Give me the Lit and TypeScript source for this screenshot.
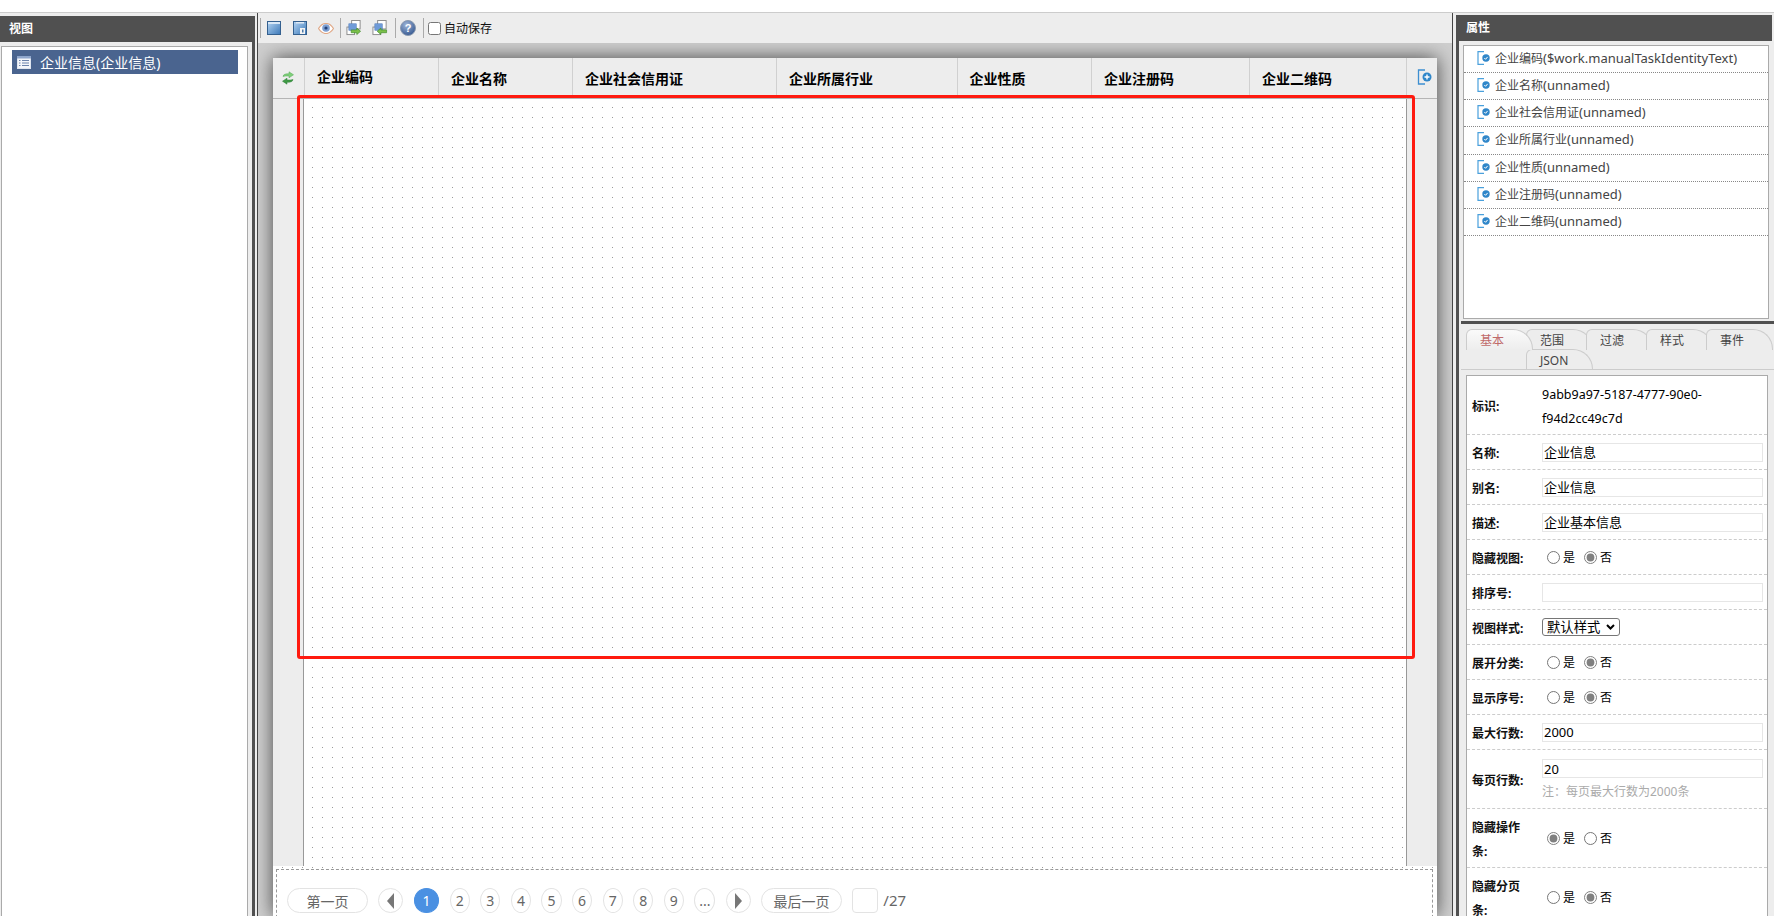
import { LitElement, html, css, svg } from "lit";
import { customElement } from "lit/decorators.js";

const saveIcon = (label: boolean) => html`<svg class="ic14" viewBox="0 0 14 14">
  <defs><linearGradient id="sg" x1="0" y1="0" x2="1" y2="1"><stop offset="0" stop-color="#b5d5f3"/><stop offset="1" stop-color="#3b78b8"/></linearGradient></defs>
  <rect x=".5" y=".5" width="13" height="13" fill="url(#sg)" stroke="#34608f"/>
  ${label ? svg`<rect x="3" y="1" width="8" height="1.500" fill="#dfeaf5"/><rect x="7" y="7" width="5" height="6" fill="#f4f4f4"/><rect x="9" y="8.500" width="1.500" height="3" fill="#4b79a8"/>` : svg`<rect x="1" y="1" width="12" height="2" fill="#d8e8f7"/>`}
</svg>`;

const eyeIcon = html`<svg class="eye" viewBox="0 0 16 11">
  <path d="M.5 5.500C3 1.500 5.500.5 8 .5s5 1 7.500 5c-2.500 4-5 5-7.500 5s-5-1-7.500-5z" fill="#fff" stroke="#e0a988" stroke-width="1.200"/>
  <circle cx="8" cy="5" r="3.800" fill="#7c9fd2"/><circle cx="8" cy="5" r="1.600" fill="#23427a"/>
</svg>`;

const transferIcon = (back: boolean) => html`<svg class="ic16" viewBox="0 0 16 17">
  <rect x="5.500" y=".5" width="9" height="9" fill="#fff" stroke="#8a8a8a"/>
  <rect x=".5" y="7.500" width="8" height="8" fill="#fff" stroke="#8a8a8a"/>
  <rect x="2.500" y="4" width="8" height="7" fill="#6f9bd8" stroke="#4c77b5" stroke-width=".5"/>
  ${back
    ? svg`<path d="M5 12l4-3.500v2h6v3H9v2z" fill="#7cc04a" stroke="#3f8a2a" stroke-width=".7"/>`
    : svg`<path d="M15 12l-4-3.500v2H5v3h6v2z" fill="#7cc04a" stroke="#3f8a2a" stroke-width=".7"/>`}
</svg>`;

const helpIcon = html`<svg class="ic16" viewBox="0 0 16 16">
  <defs><radialGradient id="hg" cx=".4" cy=".3" r=".8"><stop offset="0" stop-color="#9fb6d8"/><stop offset="1" stop-color="#2c4f8a"/></radialGradient></defs>
  <circle cx="8" cy="8" r="7.500" fill="url(#hg)" stroke="#8a9ab0"/>
  <text x="8" y="12" text-anchor="middle" class="q">?</text>
</svg>`;

const refreshIcon = html`<svg class="refresh" viewBox="0 0 12 14">
  <path d="M1 5.500C1.500 3 3.500 2.800 7 2.800V.8L11.500 3.800 7 6.800V5C4 5 2.500 5 1 5.500z" fill="#7fcf7a" stroke="#55a855" stroke-width=".5"/>
  <path d="M11 8.500C10.500 11 8.500 11.200 5 11.200v2L.5 10.200 5 7.200V9c3 0 4.500 0 6-.5z" fill="#3f9a45" stroke="#2f7f38" stroke-width=".5"/>
</svg>`;

const addIcon = html`<svg class="add" viewBox="0 0 14 16">
  <path d="M7.500 1H1v14h6.500" fill="none" stroke="#3d8fd1" stroke-width="1.300"/>
  <circle cx="9.500" cy="8" r="4.500" fill="#2f86c9"/>
  <path d="M7 8h5M9.500 5.500v5" stroke="#fff" stroke-width="1.400"/>
</svg>`;

const fieldIcon = html`<svg class="field" viewBox="0 0 13 14">
  <path d="M7 .7H1v12.600h6" fill="none" stroke="#4aa0dc" stroke-width="1.200"/>
  <circle cx="9" cy="7" r="3.700" fill="#2f86c9"/>
  <path d="M7.300 7l1.300 1.300 2-2.400" fill="none" stroke="#fff" stroke-width="1"/>
</svg>`;

const listIcon = html`<svg class="listic" viewBox="0 0 14 13">
  <rect x=".5" y=".5" width="13" height="12" fill="#f4f6fa" stroke="#dfe5ef"/>
  <rect x="0" y="0" width="14" height="2.500" fill="#8fa6cc"/>
  <path d="M2 4.500h1.500M5 4.500h7M2 7h1.500M5 7h7M2 9.500h1.500M5 9.500h7" stroke="#6c83ac"/>
</svg>`;

const chevron = html`<svg class="chev" viewBox="0 0 9 6"><path d="M1 1l3.500 3.500L8 1" fill="none" stroke="#000" stroke-width="2"/></svg>`;

const COLS = ["企业编码", "企业名称", "企业社会信用证", "企业所属行业", "企业性质", "企业注册码", "企业二维码"];
const FIELDS: [string, string][] = [
  ["企业编码", "($work.manualTaskIdentityText)"],
  ["企业名称", "(unnamed)"],
  ["企业社会信用证", "(unnamed)"],
  ["企业所属行业", "(unnamed)"],
  ["企业性质", "(unnamed)"],
  ["企业注册码", "(unnamed)"],
  ["企业二维码", "(unnamed)"],
];
const TABS = ["基本", "范围", "过滤", "样式", "事件"];
const PAGES = ["2", "3", "4", "5", "6", "7", "8", "9", "..."];

@customElement("app-root")
export class AppRoot extends LitElement {
  static styles = css`
    :host { display: block; font-family: "Noto Sans", "Noto Sans CJK SC", sans-serif; font-size: 12px; color: #000; }
    * { box-sizing: border-box; }
    .root { position: relative; height: 916px; width: 1774px; overflow: hidden; padding-top: 12px; background: #fff; }
    .main { display: flex; height: 904px; border-top: 1px solid #ccc; background: #ededed; }

    .left { width: 257px; flex: none; display: flex; flex-direction: column; }
    .head { height: 26px; background: #505050; color: #fff; font-weight: 700; font-size: 12px; line-height: 26px; flex: none; }
    .left .head { margin-top: 3px; width: 255px; padding-left: 9px; }
    .left-body { flex: 1; display: flex; width: 255px; border-right: 3px solid #505050; padding: 4px 4px 0 1px; }
    .tree { flex: 1; background: #fff; border: 1px solid #aaa; border-bottom: 0; padding: 3px 9px 3px 10px; }
    .tree-item { height: 24px; background: #4a648f; color: #fff; display: flex; align-items: center; padding-left: 5px; font-size: 14px; gap: 9px; }
    .listic { width: 14px; height: 13px; }

    .center { width: 1196px; flex: none; border-left: 1px solid #444; border-right: 1px solid #444; display: flex; flex-direction: column; }
    .toolbar { height: 30px; flex: none; display: flex; align-items: center; padding-left: 2px; }
    .sep { width: 1px; height: 20px; background: #aaa; flex: none; }
    .toolbar span:not(.sep) { display: flex; align-items: center; }
    .ic14 { width: 14px; height: 14px; flex: none; }
    .ic16 { width: 16px; height: 16px; flex: none; }
    .eye { width: 16px; height: 11px; flex: none; }
    .q { font: 700 11px "Liberation Sans", sans-serif; fill: #fff; }
    .t1 { margin-left: 6px; } .t2 { margin-left: 12px; } .t3 { margin-left: 11px; } .t4 { margin-left: 6px; }
    .t5 { margin-left: 5px; } .t6 { margin-left: 10px; } .t7 { margin-left: 7px; } .t8 { margin-left: 4px; }
    .t9 { margin-left: 7px; }
    .auto { display: flex; align-items: center; margin-left: 4px; color: #111; }
    .auto input { width: 13px; height: 13px; margin: 0 3px 0 0; }

    .stage { flex: 1; min-height: 0; background: #cfcfcf; padding: 15px 15px 0; overflow: hidden; }
    .card { height: 100%; background: #fff; box-shadow: 0 0 18px #484848; display: flex; flex-direction: column; }
    .thead { height: 41px; flex: none; background: #ededed; border-bottom: 1px solid #b5b5b5; display: grid; grid-template-columns: 31px 134px 134px 204px 180.500px 134.500px 158px 157px 31px; }
    .th { border-left: 1px solid #d0d0d0; display: flex; align-items: center; padding: 0 0 0 12px; font-weight: 700; font-size: 14px; color: #000; }
    .th.first { padding-bottom: 4px; }
    .th.ic { border: 0; padding: 0 0 0 9px; }
    .th.plus { padding: 0 0 0 10px; }
    .refresh { width: 12px; height: 14px; }
    .add { width: 15px; height: 16px; margin-bottom: 3px; }

    .tbody { height: 767px; flex: none; display: flex; }
    .gut { width: 31px; background: #ededed; flex: none; }
    .gut.l { border-right: 1px solid #999; }
    .gut.r { border-left: 1px solid #999; }
    .dots { background-color: #fff; background-image: conic-gradient(at 1px 1px, transparent 75%, #999 0); background-size: 10px 10px; }
    .canvas { flex: 1; background-position: 8px 8px; }

    .pager { flex: 1; padding: 3px 4px 0 3px; background-position: 9px 1px; }
    .pager-in { height: 100px; background: #fff; border: 1px dashed #999; padding: 18px 0 0 10px; display: flex; gap: 10.400px; align-items: flex-start; }
    .pg { height: 25px; width: 20.200px; flex: none; border: 1px solid #e3e3e3; border-radius: 50%; color: #666; font-size: 14px; display: flex; align-items: center; justify-content: center; background: #fff; }
    .pg.wide { width: 81px; border-radius: 13px; }
    .pg.arrow { width: 25px; }
    .pg.on { width: 25.500px; background: #4a90e2; border-color: #4a90e2; color: #fff; }
    .pg.more { width: 21px; }
    .tri { width: 0; height: 0; border-top: 8px solid transparent; border-bottom: 8px solid transparent; }
    .tri.l { border-right: 7px solid #777; }
    .tri.r { border-left: 7px solid #777; }
    .pg-in { width: 26px; height: 25px; flex: none; border: 1px solid #e3e3e3; border-radius: 4px; background: #fff; }
    .pg-total { font-size: 15px; color: #666; margin-left: -5.500px; line-height: 25px; }

    .right { width: 321px; flex: none; padding-left: 3px; display: flex; flex-direction: column; }
    .right .head { margin-top: 2px; width: 316px; padding-left: 10px; }
    .right-body { flex: 1; min-height: 0; border-left: 3px solid #505050; padding-left: 2px; display: flex; flex-direction: column; }
    .fields { height: 274px; flex: none; margin: 4px 0 2px 2px; width: 306px; background: #fff; border: 1px solid #aaa; }
    .field-row { height: 27.150px; display: flex; align-items: center; gap: 5px; padding: 0 0 2px 13px; border-bottom: 1px dotted #888; color: #444; font-size: 12px; }
    .latin { font-size: 13px; }
    .field { width: 13px; height: 14px; flex: none; }
    .rule { height: 3px; flex: none; background: #505050; }

    .tabs { flex: none; height: 46px; padding: 5px 0 0 5px; border-bottom: 1px solid #ccc; display: grid; grid-template-columns: repeat(5, 60px); grid-auto-rows: 20px; overflow: hidden; }
    .tab { width: 67px; height: 21px; border: 1px solid #ccc; border-bottom: 0; border-radius: 6px 20px 0 0; padding-left: 13px; line-height: 21px; color: #444; background: #ededed; }
    .tab.on { color: #c06a6a; background: linear-gradient(#fafafa, #ededed); position: relative; z-index: 1; }
    .tab.json { grid-column: 2; }

    .form { margin: 5px 0 0 5px; width: 302px; flex: 1; background: #fff; border: 1px solid #aaa; border-bottom: 0; overflow: hidden; }
    .row { display: grid; grid-template-columns: 70px 1fr; padding: 5px; border-bottom: 1px dashed #ccc; align-items: center; line-height: 24px; }
    .row > label { font-weight: 700; font-size: 12px; width: 60px; color: #111; transform: translateY(2px); }
    .val { min-height: 24px; display: flex; align-items: center; flex-wrap: wrap; }
    .val.id { display: block; width: 190px; height: 48px; padding-top: 2px; font-size: 12.500px; }
    .inp { width: 221px; height: 19px; border: 1px solid #e6e6e6; padding: 0 1px; font: inherit; font-size: 13px; color: #000; background: #fff; outline: none; }
    .inp.top { margin: 4px 0 1px; }
    .hint { color: #aaa; width: 100%; height: 24px; line-height: 26px; font-size: 12px; }
    .sel { width: 78px; height: 18px; font-size: 13.333px; line-height: 16px; font-family: "Noto Sans CJK SC", sans-serif; background: #fff; color: #000; border: 1px solid #767676; border-radius: 3px; padding: 0 4px; display: flex; align-items: center; justify-content: space-between; overflow: hidden; }
    .chev { width: 9px; height: 6px; flex: none; }
    .radio { display: flex; align-items: center; margin-right: 4px; accent-color: #808080; }
    .radio input { width: 13px; height: 13px; margin: 0 3px 0 5px; }
    .rt { padding-top: 2px; line-height: 22px; }

    .mark { position: absolute; left: 297px; top: 95px; width: 1118px; height: 564px; border: 3px solid #ff1a0f; border-radius: 3px; pointer-events: none; }
  `;

  private radios(name: string, yes: boolean) {
    return html`<div class="val">
      <span class="radio"><input type="radio" name=${name} ?checked=${yes} /><span class="rt">是</span></span>
      <span class="radio"><input type="radio" name=${name} ?checked=${!yes} /><span class="rt">否</span></span>
    </div>`;
  }

  private input(value: string) {
    return html`<div class="val"><input class="inp" .value=${value} /></div>`;
  }

  render() {
    return html`<div class="root">
      <div class="main">
        <section class="left">
          <div class="head">视图</div>
          <div class="left-body">
            <div class="tree"><div class="tree-item">${listIcon}<span>企业信息(企业信息)</span></div></div>
          </div>
        </section>

        <section class="center">
          <div class="toolbar">
            <span class="sep"></span>
            <span class="t1">${saveIcon(false)}</span>
            <span class="t2">${saveIcon(true)}</span>
            <span class="t3">${eyeIcon}</span>
            <span class="sep t4"></span>
            <span class="t5">${transferIcon(false)}</span>
            <span class="t6">${transferIcon(true)}</span>
            <span class="sep t7"></span>
            <span class="t8">${helpIcon}</span>
            <span class="sep t9"></span>
            <label class="auto"><input type="checkbox" />自动保存</label>
          </div>
          <div class="stage">
            <div class="card">
              <div class="thead">
                <div class="th ic">${refreshIcon}</div>
                ${COLS.map((c, i) => html`<div class="th ${i === 0 ? "first" : ""}">${c}</div>`)}
                <div class="th plus">${addIcon}</div>
              </div>
              <div class="tbody">
                <div class="gut l"></div>
                <div class="canvas dots"></div>
                <div class="gut r"></div>
              </div>
              <div class="pager dots">
                <div class="pager-in">
                  <div class="pg wide">第一页</div>
                  <div class="pg arrow"><span class="tri l"></span></div>
                  <div class="pg on">1</div>
                  ${PAGES.map((p) => html`<div class="pg ${p === "..." ? "more" : ""}">${p}</div>`)}
                  <div class="pg arrow"><span class="tri r"></span></div>
                  <div class="pg wide">最后一页</div>
                  <div class="pg-in"></div>
                  <div class="pg-total">/27</div>
                </div>
              </div>
            </div>
          </div>
        </section>

        <section class="right">
          <div class="head">属性</div>
          <div class="right-body">
            <div class="fields">
              ${FIELDS.map(([n, p]) => html`<div class="field-row">${fieldIcon}<span>${n}<span class="latin">${p}</span></span></div>`)}
            </div>
            <div class="rule"></div>
            <div class="tabs">
              ${TABS.map((t, i) => html`<div class="tab ${i === 0 ? "on" : ""}">${t}</div>`)}
              <div class="tab json">JSON</div>
            </div>
            <div class="form">
              <div class="row"><label>标识:</label><div class="val id">9abb9a97-5187-4777-90e0-f94d2cc49c7d</div></div>
              <div class="row"><label>名称:</label>${this.input("企业信息")}</div>
              <div class="row"><label>别名:</label>${this.input("企业信息")}</div>
              <div class="row"><label>描述:</label>${this.input("企业基本信息")}</div>
              <div class="row"><label>隐藏视图:</label>${this.radios("a", false)}</div>
              <div class="row"><label>排序号:</label>${this.input("")}</div>
              <div class="row"><label>视图样式:</label><div class="val"><div class="sel" role="combobox"><span>默认样式</span>${chevron}</div></div></div>
              <div class="row"><label>展开分类:</label>${this.radios("b", false)}</div>
              <div class="row"><label>显示序号:</label>${this.radios("c", false)}</div>
              <div class="row"><label>最大行数:</label>${this.input("2000")}</div>
              <div class="row"><label>每页行数:</label><div class="val"><input class="inp top" .value=${"20"} /><div class="hint">注：每页最大行数为2000条</div></div></div>
              <div class="row"><label>隐藏操作条:</label>${this.radios("d", true)}</div>
              <div class="row"><label>隐藏分页条:</label>${this.radios("e", false)}</div>
            </div>
          </div>
        </section>
      </div>
      <div class="mark"></div>
    </div>`;
  }
}
